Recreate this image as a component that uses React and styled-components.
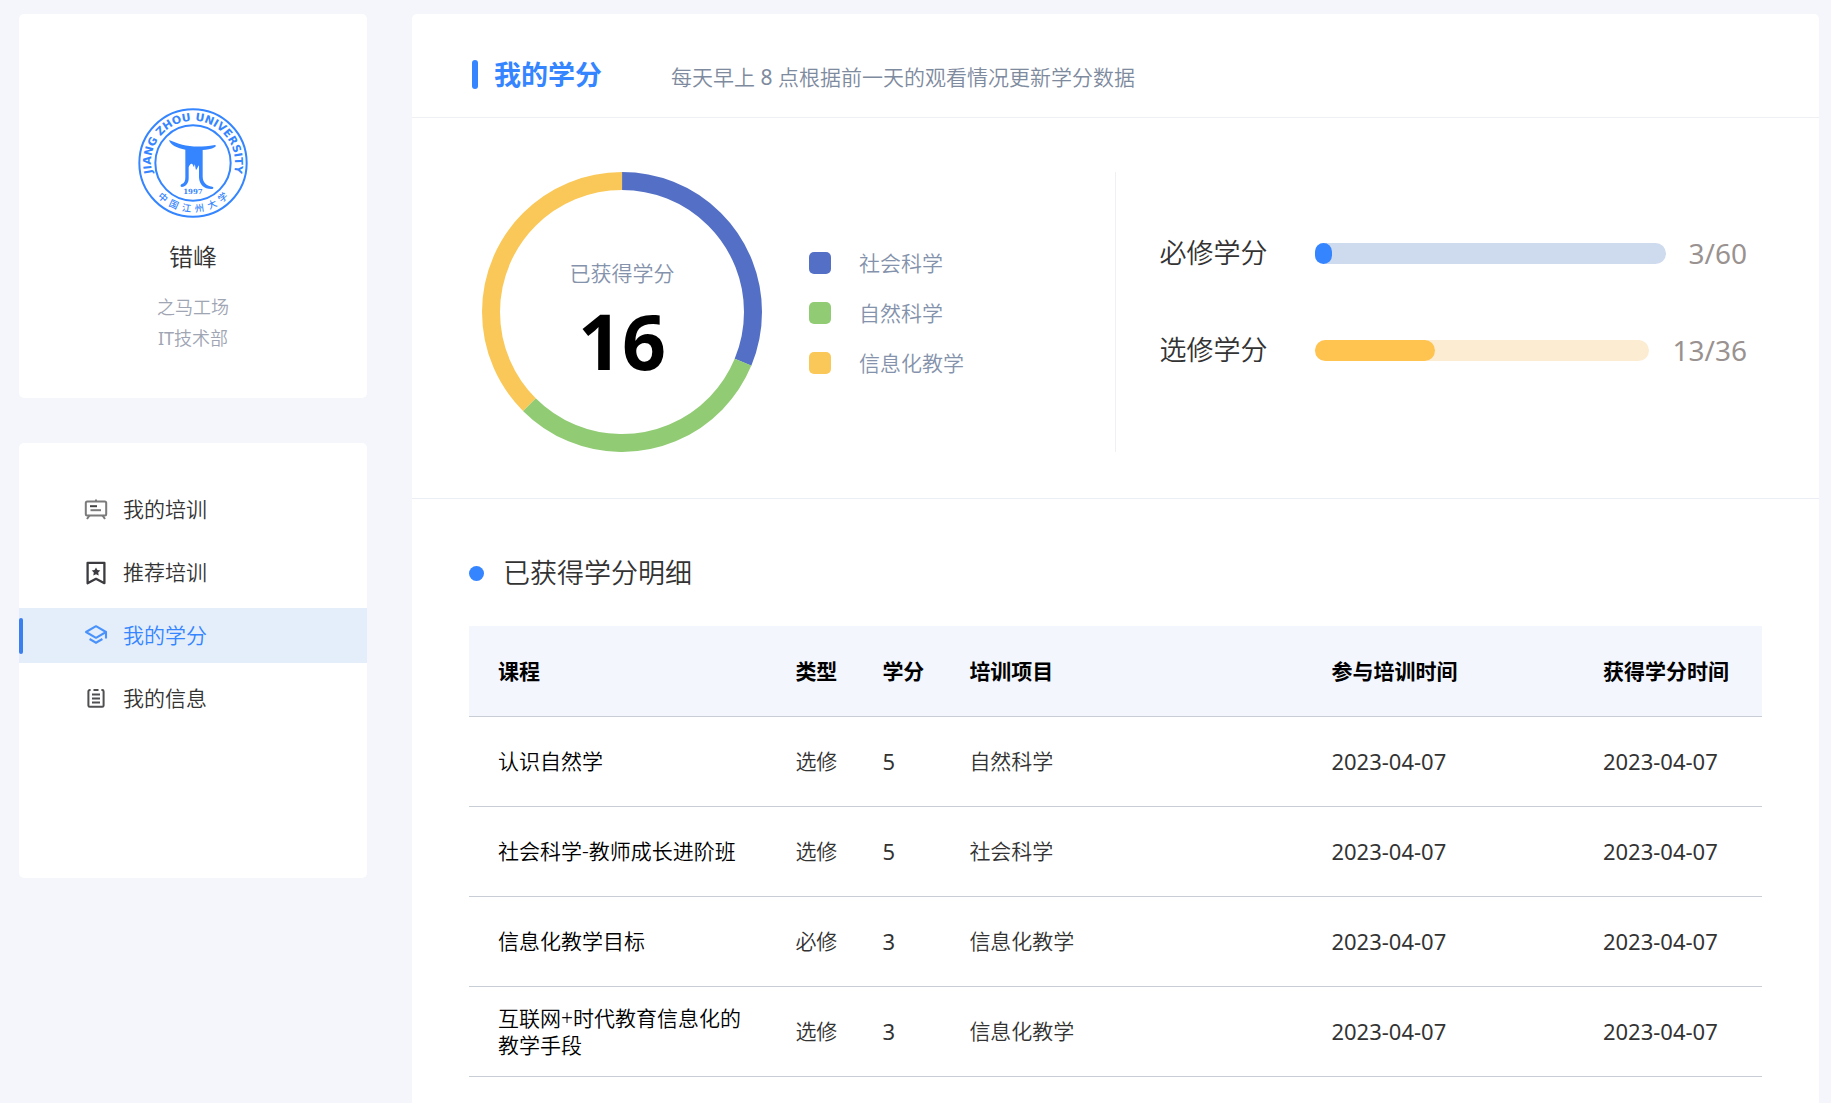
import React from "react";
import styled, { createGlobalStyle } from "styled-components";

const GlobalStyle = createGlobalStyle`
  * {
    box-sizing: border-box;
  }

  body {
    margin: 0;
    background-color: #f4f6fb;
    color: #333;
    font-family: "Noto Sans", "Noto Sans CJK SC", sans-serif;
    font-size: 21px;
    font-weight: 350;
    line-height: 27px;
  }
`;

const Page = styled.div`
  display: flex;
  gap: 45px;
  min-height: 100vh;
  padding: 14px 12px 0 19px;
`;

const Sidebar = styled.aside`
  display: flex;
  flex-direction: column;
  flex: 0 0 348px;
  gap: 45px;
`;

const ProfileCard = styled.section`
  display: flex;
  flex-direction: column;
  align-items: center;
  padding: 94px 20px 44px;
  background-color: #fff;
  border-radius: 5px;
`;

const Seal = styled.svg`
  width: 110px;
  height: 110px;
`;

const UserName = styled.h2`
  margin: 20px 0 16px;
  font-size: 24px;
  font-weight: 350;
  line-height: 38px;
`;

const Department = styled.p`
  margin: 0;
  color: #a0a5b3;
  font-size: 18px;
  line-height: 31px;
`;

const Menu = styled.nav`
  display: flex;
  flex-direction: column;
  gap: 8px;
  padding: 39px 0 152px;
  background-color: #fff;
  border-radius: 5px;
`;

const MenuItem = styled.a`
  display: flex;
  align-items: center;
  height: 55px;
  color: ${(props) => (props.$active ? "#3485ff" : "#333")};
  background-color: ${(props) => (props.$active ? "#e4eefb" : "transparent")};
  text-decoration: none;

  &::before {
    content: "";
    width: 4px;
    height: 36px;
    margin-right: 61px;
    border-radius: 2px;
    background-color: ${(props) => (props.$active ? "#3a7ff0" : "transparent")};
  }

  svg {
    width: 24px;
    height: 24px;
    margin-right: 15px;
  }
`;

const Main = styled.main`
  flex: 1;
  min-width: 0;
  padding-bottom: 26px;
  background-color: #fff;
  border-radius: 5px 5px 0 0;
`;

const Header = styled.header`
  display: flex;
  align-items: center;
  height: 104px;
  padding: 18px 60px 0;
  border-bottom: 1px solid #eef0f3;
`;

const TitleBar = styled.span`
  width: 6px;
  height: 29px;
  margin-right: 16px;
  border-radius: 3px;
  background-color: #3485ff;
`;

const Title = styled.h1`
  margin: 0 69px 0 0;
  color: #3485ff;
  font-size: 27px;
  font-weight: 700;
`;

const Hint = styled.p`
  margin: 6px 0 0;
  color: #7e8a9e;
`;

// latin letters and digits get too thin next to the chinese text
const Latin = styled.span`
  font-weight: 400;
`;

const Overview = styled.section`
  display: grid;
  grid-template-columns: 1fr 1fr;
  padding: 54px 0 46px;
  border-bottom: 1px solid #eceef5;
`;

const ChartArea = styled.div`
  display: flex;
  align-items: center;
  gap: 47px;
  padding-left: 70px;
  border-right: 1px solid #eef0f3;
`;

const Donut = styled.div`
  display: grid;
  place-items: center;
  width: 280px;
  height: 280px;

  > * {
    grid-area: 1 / 1;
  }
`;

const DonutLabel = styled.div`
  display: flex;
  flex-direction: column;
  align-items: center;
  padding-top: 30px;
  color: #8492ab;

  strong {
    color: #000;
    font-size: 77px;
    font-weight: 700;
    line-height: 108px;
  }
`;

const Legend = styled.ul`
  display: flex;
  flex-direction: column;
  gap: 23px;
  margin: 0;
  padding: 2px 0 0;
  list-style: none;
`;

const LegendItem = styled.li`
  display: flex;
  align-items: center;
  gap: 28px;
  color: #8492ab;

  &::before {
    content: "";
    width: 22px;
    height: 22px;
    border-radius: 5px;
    background-color: ${(props) => props.$color};
  }
`;

const ProgressArea = styled.div`
  display: flex;
  flex-direction: column;
  gap: 57px;
  padding: 61px 72px 0 44px;
`;

const ProgressRow = styled.div`
  display: flex;
  align-items: center;
  font-size: 27px;
  line-height: 40px;
`;

const Track = styled.div`
  flex: 1;
  height: 21px;
  margin: 0 23px 0 47px;
  border-radius: 11px;
  background-color: ${(props) => props.$color};
`;

const Fill = styled.div`
  height: 100%;
  border-radius: 11px;
  background-color: ${(props) => props.$color};
`;

const Amount = styled.span`
  color: #999290;
  font-size: 28px;
  font-weight: 400;
`;

const Detail = styled.section`
  padding: 54px 57px 0;
`;

const DetailTitle = styled.h2`
  display: flex;
  align-items: center;
  gap: 19px;
  margin: 0 0 33px;
  font-size: 27px;
  font-weight: 350;
  line-height: 40px;

  &::before {
    content: "";
    width: 15px;
    height: 15px;
    border-radius: 50%;
    background-color: #3485ff;
  }
`;

const Table = styled.table`
  width: 100%;
  table-layout: fixed;
  border-collapse: separate;
  border-spacing: 0;
`;

const Th = styled.th`
  width: ${(props) => props.$width};
  height: 91px;
  padding: 0 0 0 29px;
  border-bottom: 1px solid #c9cdd6;
  background-color: #f3f6fd;
  color: #000;
  font-weight: 700;
  text-align: left;
`;

const Td = styled.td`
  height: 90px;
  padding: 0 15px 0 29px;
  border-bottom: 1px solid #c9cdd6;
  color: ${(props) => (props.$main ? "#000" : "#333")};
`;

const NumberTd = styled(Td)`
  padding-right: 0;
  font-size: 22px;
  font-weight: 400;
`;

const menus = [
  { name: "我的培训", icon: BoardIcon },
  { name: "推荐培训", icon: BookmarkIcon },
  { name: "我的学分", icon: CapIcon, active: true },
  { name: "我的信息", icon: NoteIcon },
];

const categories = [
  { name: "社会科学", value: 5, color: "#5470c6" },
  { name: "自然科学", value: 5, color: "#91cc75" },
  { name: "信息化教学", value: 6, color: "#fac858" },
];

const progress = [
  { name: "必修学分", done: 3, total: 60, color: "#3485ff", track: "#cedaed" },
  { name: "选修学分", done: 13, total: 36, color: "#ffc34f", track: "#fbecd2" },
];

const columns = [
  { name: "课程", width: "23%" },
  { name: "类型", width: "87px" },
  { name: "学分", width: "87px" },
  { name: "培训项目", width: "28%" },
  { name: "参与培训时间", width: "21%" },
  { name: "获得学分时间", width: "auto" },
];

const records = [
  { course: "认识自然学", type: "选修", credit: 5, project: "自然科学" },
  { course: "社会科学-教师成长进阶班", type: "选修", credit: 5, project: "社会科学" },
  { course: "信息化教学目标", type: "必修", credit: 3, project: "信息化教学" },
  { course: "互联网+时代教育信息化的教学手段", type: "选修", credit: 3, project: "信息化教学" },
];

function BoardIcon() {
  return (
    <svg viewBox="0 0 24 24" fill="none" stroke="#7b7b7b" strokeWidth="2">
      <rect x="1.8" y="3.4" width="20.4" height="14" rx="1.5" />
      <path d="M12 1.6v2M5.5 17.4L3 21M18.5 17.4L21 21" />
      <path d="M6 8.2h7" stroke="#444" />
      <path d="M6.5 12.2H17" />
    </svg>
  );
}

function BookmarkIcon() {
  return (
    <svg viewBox="0 0 24 24" fill="none" stroke="#3c3c40" strokeWidth="2.3">
      <path d="M3.6 1.8h16.8v20.4L12 17.8l-8.4 4.4z" strokeLinejoin="round" />
      <path
        d="M12 6.4l1.4 2.7 2.9.4-2.1 2.1.5 3-2.7-1.4-2.7 1.4.5-3-2.1-2.1 2.9-.4z"
        fill="#3c3c40"
        stroke="none"
      />
    </svg>
  );
}

function CapIcon() {
  return (
    <svg viewBox="0 0 24 24" fill="none" stroke="#4a92fb" strokeWidth="2.1">
      <path d="M12 2.2L22 8l-10 5.8L2 8z" strokeLinejoin="round" />
      <path d="M22 8v6.4M5.6 15l6.4 3.7 6.4-3.7" />
    </svg>
  );
}

function NoteIcon() {
  return (
    <svg viewBox="0 0 24 24" fill="none" stroke="#4f4f52" strokeWidth="2">
      <path d="M6.6 3h-.8a1.4 1.4 0 0 0-1.4 1.4v14a1.4 1.4 0 0 0 1.4 1.4h12.4a1.4 1.4 0 0 0 1.4-1.4v-14A1.4 1.4 0 0 0 18.2 3h-.8" />
      <path d="M9.5 3h5M8 7.6h8M8 11.5h8M8 15.4h8" />
    </svg>
  );
}

function SchoolSeal() {
  return (
    <Seal viewBox="0 0 330 330" fill="#3485ff" role="img" aria-label="中国江州大学">
      <circle cx="165" cy="165" r="161" fill="none" stroke="#3485ff" strokeWidth="6" />
      <circle cx="165" cy="165" r="113" fill="none" stroke="#3485ff" strokeWidth="6" />
      <path id="seal-arc" d="M48 211A126 126 0 1 1 282 211" fill="none" />
      <text fontFamily="DejaVu Sans" fontSize="33" fontWeight="700" textAnchor="middle">
        <textPath href="#seal-arc" startOffset="50%">
          JIANG ZHOU UNIVERSITY
        </textPath>
      </text>
      {"中国江州大学".split("").map((char, index) => (
        <text
          key={char}
          x="165"
          y="312"
          fontFamily="Noto Sans CJK SC"
          fontSize="28"
          fontWeight="500"
          textAnchor="middle"
          transform={`rotate(${41 - index * 16.4} 165 165)`}
        >
          {char}
        </text>
      ))}
      <path d="M93 96C130 112 165 122 231 111C234 111 234 115 231 117C220 124 205 126 194 126V205C194 222 203 234 223 236C228 237 227 243 222 243C200 244 184 232 183 208V172C180 174 178 184 174 186C172 182 172 172 170 169L168 178L163 168C158 165 154 172 152 178V210C152 225 145 235 131 237C126 236 127 230 131 228C139 226 142 220 142 208V125C118 120 98 112 93 96Z" />
      <text
        x="165"
        y="259"
        fontFamily="DejaVu Serif"
        fontSize="21"
        fontWeight="700"
        textAnchor="middle"
      >
        1997
      </text>
    </Seal>
  );
}

function DonutChart({ data, total }) {
  const radius = 131;
  const length = 2 * Math.PI * radius;
  let passed = 0;

  return (
    <svg width="280" height="280" viewBox="0 0 280 280">
      {data.map((item) => {
        const start = passed;
        passed += item.value;
        return (
          <circle
            key={item.name}
            cx="140"
            cy="140"
            r={radius}
            fill="none"
            stroke={item.color}
            strokeWidth="18"
            strokeDasharray={`${(item.value / total) * length} ${length}`}
            transform={`rotate(${(start / total) * 360 - 90} 140 140)`}
          />
        );
      })}
    </svg>
  );
}

const App = () => {
  const total = categories.reduce((sum, item) => sum + item.value, 0);

  return (
    <>
      <GlobalStyle />
      <Page>
        <Sidebar>
          <ProfileCard>
            <SchoolSeal />
            <UserName>错峰</UserName>
            <Department>之马工场</Department>
            <Department>
              <Latin>IT</Latin>技术部
            </Department>
          </ProfileCard>
          <Menu>
            {menus.map(({ name, icon: Icon, active }) => (
              <MenuItem
                key={name}
                href="#"
                $active={active}
                aria-current={active ? "page" : undefined}
              >
                <Icon />
                {name}
              </MenuItem>
            ))}
          </Menu>
        </Sidebar>

        <Main>
          <Header>
            <TitleBar />
            <Title>我的学分</Title>
            <Hint>
              每天早上 <Latin>8</Latin> 点根据前一天的观看情况更新学分数据
            </Hint>
          </Header>

          <Overview>
            <ChartArea>
              <Donut>
                <DonutChart data={categories} total={total} />
                <DonutLabel>
                  <span>已获得学分</span>
                  <strong>{total}</strong>
                </DonutLabel>
              </Donut>
              <Legend>
                {categories.map((item) => (
                  <LegendItem key={item.name} $color={item.color}>
                    {item.name}
                  </LegendItem>
                ))}
              </Legend>
            </ChartArea>
            <ProgressArea>
              {progress.map((item) => (
                <ProgressRow key={item.name}>
                  <span>{item.name}</span>
                  <Track
                    $color={item.track}
                    role="progressbar"
                    aria-label={item.name}
                    aria-valuenow={item.done}
                    aria-valuemax={item.total}
                  >
                    <Fill
                      $color={item.color}
                      style={{ width: `${(item.done / item.total) * 100}%` }}
                    />
                  </Track>
                  <Amount>
                    {item.done}/{item.total}
                  </Amount>
                </ProgressRow>
              ))}
            </ProgressArea>
          </Overview>

          <Detail>
            <DetailTitle>已获得学分明细</DetailTitle>
            <Table>
              <thead>
                <tr>
                  {columns.map((column) => (
                    <Th key={column.name} scope="col" $width={column.width}>
                      {column.name}
                    </Th>
                  ))}
                </tr>
              </thead>
              <tbody>
                {records.map((record) => (
                  <tr key={record.course}>
                    <Td $main>{record.course}</Td>
                    <Td>{record.type}</Td>
                    <NumberTd>{record.credit}</NumberTd>
                    <Td>{record.project}</Td>
                    <NumberTd>2023-04-07</NumberTd>
                    <NumberTd>2023-04-07</NumberTd>
                  </tr>
                ))}
              </tbody>
            </Table>
          </Detail>
        </Main>
      </Page>
    </>
  );
};

export default App;
